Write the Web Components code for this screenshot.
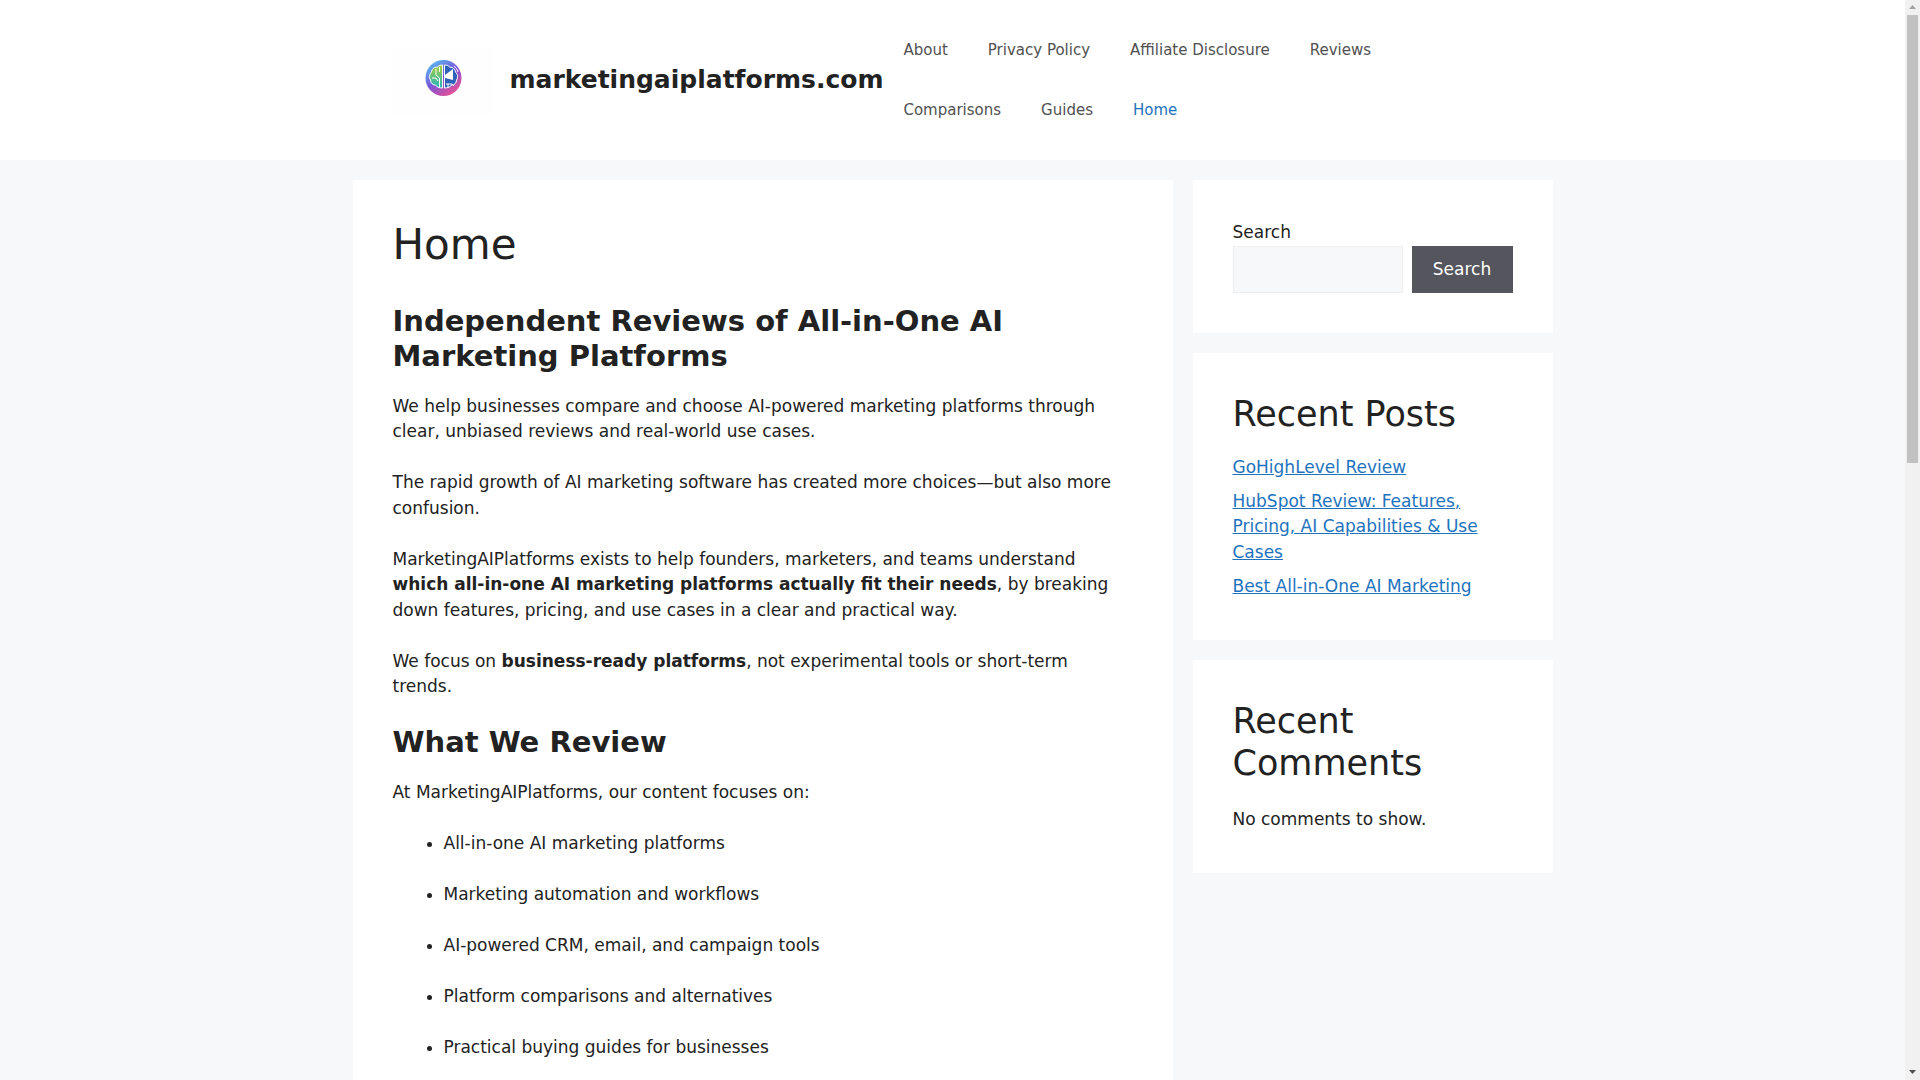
<!DOCTYPE html>
<html lang="en">
<head>
<meta charset="utf-8">
<title>marketingaiplatforms.com</title>
<style>
    html, body { margin: 0; padding: 0; }
    body {
        background: #f7f8f9;
        color: #222222;
        font: 17px/1.5 "DejaVu Sans", sans-serif;
        padding-right: 15px;
    }
</style>
</head>
<body>
<site-header></site-header>
<page-layout>
    <main-article></main-article>
    <side-bar slot="side"></side-bar>
</page-layout>
<site-footer></site-footer>
<fake-scrollbar></fake-scrollbar>

<script>
class SiteHeader extends HTMLElement {
    constructor() {
        super();
        this.attachShadow({ mode: "open" });
        const links = ["About", "Privacy Policy", "Affiliate Disclosure", "Reviews", "Comparisons", "Guides", "Home"];
        this.shadowRoot.innerHTML = `
            <style>
                :host { display: block; background: #fff; }
                .inner {
                    display: flex;
                    align-items: center;
                    max-width: 1120px;
                    margin: 0 auto;
                    padding: 20px 40px;
                }
                .brand { display: flex; align-items: center; flex: none; }
                .logo { display: block; width: 100px; height: 67px; background: #fefefe; }
                .title {
                    margin-left: 17px;
                    font-size: 25px;
                    font-weight: 700;
                    line-height: 1.5;
                    color: #222222;
                    text-decoration: none;
                }
                nav { display: flex; flex-wrap: wrap; flex: 1; }
                nav a {
                    padding: 0 20px;
                    font-size: 15px;
                    line-height: 60px;
                    color: #515151;
                    text-decoration: none;
                }
                nav a.current { color: #1e73be; }
            </style>
            <div class="inner">
                <div class="brand">
                    <svg class="logo" viewBox="0 0 100 67" aria-hidden="true">
                        <defs>
                            <linearGradient id="ring" x1="0.1" y1="0" x2="0.8" y2="1">
                                <stop offset="0" stop-color="#4fc8f5"/>
                                <stop offset=".5" stop-color="#7a55d8"/>
                                <stop offset="1" stop-color="#f5508c"/>
                            </linearGradient>
                            <linearGradient id="leaf" x1="0" y1="0" x2="0" y2="1">
                                <stop offset="0" stop-color="#a5d039"/>
                                <stop offset="1" stop-color="#25b3c0"/>
                            </linearGradient>
                        </defs>
                        <circle cx="50.5" cy="31" r="18" fill="url(#ring)"/>
                        <path d="M49.5 18c-3 0-4 1-5 2-4 0-6 3-6 5-2 2-3 5-1 8 0 3 2 5 5 5 1 2 4 3 7 3z" fill="url(#leaf)" stroke="#fff" stroke-width="1"/>
                        <path d="M51.5 18c3 0 4 1 5 2 4 0 6 3 6 5 2 2 3 5 1 8 0 3-2 5-5 5-1 2-4 3-7 3z" fill="#2e62b8" stroke="#fff" stroke-width="1"/>
                        <path d="M43 22v6l3.500 3v9M39 31h4l2 3M46.500 20v5" fill="none" stroke="#fff" stroke-width="1"/>
                        <path d="M52 28l8-6v11l-8-2z" fill="#fff"/>
                        <path d="M61 19a9 9 0 0 1 4 6M63 16a12 12 0 0 1 5 9M66 14a15 15 0 0 1 5 10M53 37h6l2 2M55 41v-4" fill="none" stroke="#fff" stroke-width="1"/>
                    </svg>
                    <a class="title" href="#">marketingaiplatforms.com</a>
                </div>
                <nav></nav>
            </div>
        `;
        const nav = this.shadowRoot.querySelector("nav");
        links.forEach(text => {
            const a = document.createElement("a");
            a.href = "#";
            a.textContent = text;
            if (text === "Home") a.className = "current";
            nav.appendChild(a);
        });
    }
}
customElements.define("site-header", SiteHeader);

class PageLayout extends HTMLElement {
    constructor() {
        super();
        this.attachShadow({ mode: "open" });
        this.shadowRoot.innerHTML = `
            <style>
                :host { display: block; }
                .wrap {
                    display: flex;
                    gap: 20px;
                    align-items: flex-start;
                    width: 1200px;
                    margin: 20px auto 0;
                }
                .main { width: 820px; flex: none; }
                .side { width: 360px; flex: none; }
            </style>
            <div class="wrap">
                <div class="main"><slot></slot></div>
                <div class="side"><slot name="side"></slot></div>
            </div>
        `;
    }
}
customElements.define("page-layout", PageLayout);

class MainArticle extends HTMLElement {
    constructor() {
        super();
        this.attachShadow({ mode: "open" });
        this.shadowRoot.innerHTML = `
            <style>
                :host { display: block; background: #fff; padding: 40px; }
                h1 { margin: 0 0 34px; font-size: 42px; font-weight: 400; line-height: 1.2; }
                h2 { margin: 0 0 20px; font-size: 29px; font-weight: 700; line-height: 1.2; }
                p { margin: 0 0 25.5px; }
                ul { margin: 0 0 25.5px 51px; padding: 0; }
                li { margin-bottom: 25.5px; }
                a { color: #1e73be; }
            </style>
            <h1>Home</h1>
            <h2>Independent Reviews of All-in-One AI Marketing Platforms</h2>
            <p>We help businesses compare and choose AI-powered marketing platforms through clear, unbiased reviews and real-world use cases.</p>
            <p>The rapid growth of AI marketing software has created more choices—but also more confusion.</p>
            <p>MarketingAIPlatforms exists to help founders, marketers, and teams understand <b>which all-in-one AI marketing platforms actually fit their needs</b>, by breaking down features, pricing, and use cases in a clear and practical way.</p>
            <p>We focus on <b>business-ready platforms</b>, not experimental tools or short-term trends.</p>
            <h2>What We Review</h2>
            <p>At MarketingAIPlatforms, our content focuses on:</p>
            <ul>
                <li>All-in-one AI marketing platforms</li>
                <li>Marketing automation and workflows</li>
                <li>AI-powered CRM, email, and campaign tools</li>
                <li>Platform comparisons and alternatives</li>
                <li>Practical buying guides for businesses</li>
            </ul>
        `;
    }
}
customElements.define("main-article", MainArticle);

class SideBar extends HTMLElement {
    constructor() {
        super();
        this.attachShadow({ mode: "open" });
        this.shadowRoot.innerHTML = `
            <style>
                :host { display: flex; flex-direction: column; gap: 20px; }
                section { background: #fff; padding: 40px; }
                label { display: block; }
                .search { display: flex; gap: 9px; }
                input {
                    flex: 1;
                    min-width: 0;
                    height: 47px;
                    box-sizing: border-box;
                    background: #f7f8f9;
                    border: 1px solid #eeeeee;
                    padding: 0;
                }
                button {
                    width: 101px;
                    height: 47px;
                    border: 0;
                    padding: 2px 0 0;
                    background: #55555e;
                    color: #fff;
                    font: inherit;
                }
                h2 { margin: 0 0 20px; font-size: 35px; font-weight: 400; line-height: 1.2; }
                ul { margin: 0.5px 0 0; padding: 0 0 0.5px; list-style: none; }
                li { margin-bottom: 8.5px; }
                li:last-child { margin-bottom: 0; }
                a { color: #1e73be; }
                .none { margin: 23px 0 0; padding-bottom: 1px; }
                .comments h2 { margin-bottom: 0; }
            </style>
            <section>
                <label for="q">Search</label>
                <div class="search"><input id="q" type="search"><button type="button">Search</button></div>
            </section>
            <section>
                <h2>Recent Posts</h2>
                <ul>
                    <li><a href="#">GoHighLevel Review</a></li>
                    <li><a href="#">HubSpot Review: Features, Pricing, AI Capabilities &amp; Use Cases</a></li>
                    <li><a href="#">Best All-in-One AI Marketing</a></li>
                </ul>
            </section>
            <section class="comments">
                <h2>Recent Comments</h2>
                <p class="none">No comments to show.</p>
            </section>
        `;
    }
}
customElements.define("side-bar", SideBar);

class SiteFooter extends HTMLElement {
    constructor() {
        super();
        this.attachShadow({ mode: "open" });
        this.shadowRoot.innerHTML = `
            <style>
                :host { display: block; margin-top: 20px; background: #fff; padding: 20px 40px; text-align: center; font-size: 15px; }
            </style>
            <span>© 2026 marketingaiplatforms.com</span>
        `;
    }
}
customElements.define("site-footer", SiteFooter);

// headless shot draws no native scrollbar, so the classic one is drawn here
class FakeScrollbar extends HTMLElement {
    constructor() {
        super();
        this.attachShadow({ mode: "open" });
        this.shadowRoot.innerHTML = `
            <style>
                :host {
                    position: fixed;
                    top: 0;
                    right: 0;
                    bottom: 0;
                    width: 15px;
                    background: #f1f1f1;
                    display: block;
                }
                .up, .down { position: absolute; left: 4px; width: 7px; height: 4px; }
                .up { top: 5px; }
                .down { bottom: 6px; }
                .thumb { position: absolute; left: 2px; width: 11px; top: 15px; height: 448px; background: #c1c1c1; }
            </style>
            <svg class="up" viewBox="0 0 7 4"><path d="M3.500 0 7 4H0z" fill="#a3a3a3"/></svg>
            <div class="thumb"></div>
            <svg class="down" viewBox="0 0 7 4"><path d="M0 0h7L3.500 4z" fill="#505050"/></svg>
        `;
    }
}
customElements.define("fake-scrollbar", FakeScrollbar);
</script>
</body>
</html>
